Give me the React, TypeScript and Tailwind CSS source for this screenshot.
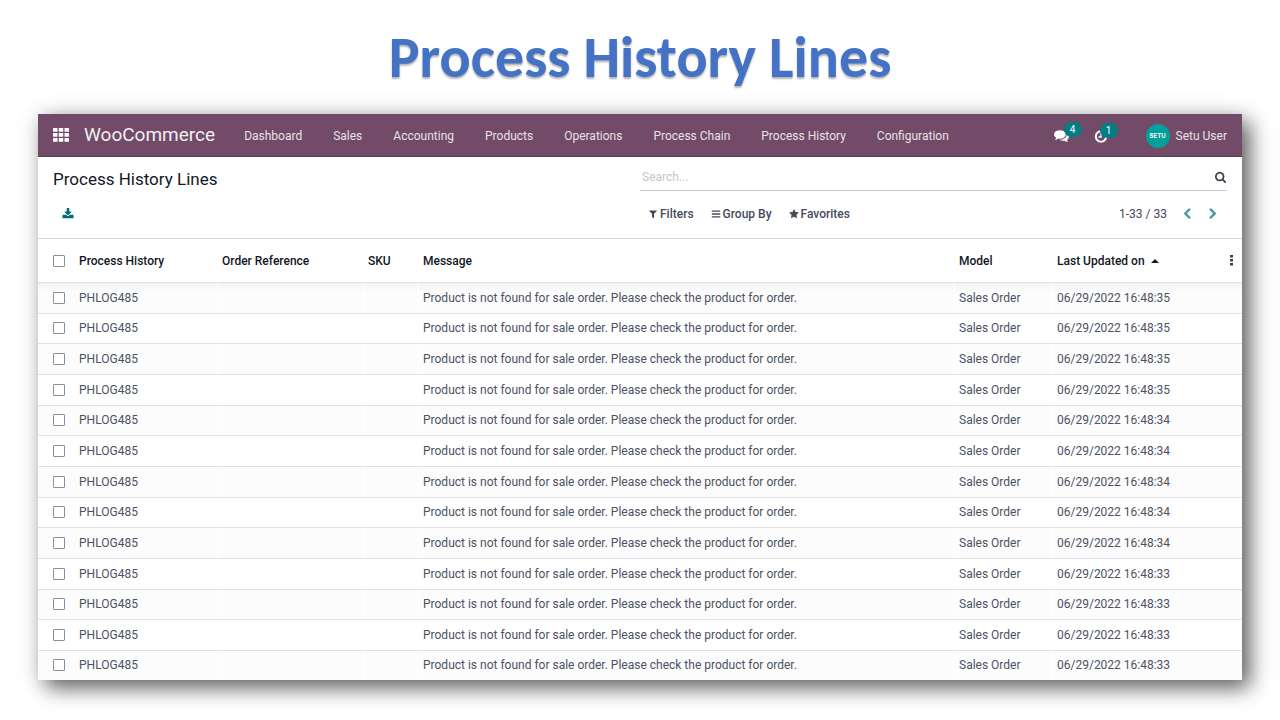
import { useState } from "react";

const navItems = ["Dashboard", "Sales", "Accounting", "Products", "Operations", "Process Chain", "Process History", "Configuration"];

const rows = [35, 35, 35, 35, 34, 34, 34, 34, 34, 33, 33, 33, 33].map((sec, i) => ({
  id: i,
  history: "PHLOG485",
  order: "",
  sku: "",
  message: "Product is not found for sale order. Please check the product for order.",
  model: "Sales Order",
  updated: `06/29/2022 16:48:${sec}`,
}));

const icons = {
  download:
    "M1728 1120v320q0 40-28 68t-68 28h-1472q-40 0-68-28t-28-68v-320q0-40 28-68t68-28h465l135 136q58 56 136 56t136-56l136-136h464q40 0 68 28t28 68zm-325-569q17 41-14 70l-448 448q-18 19-45 19t-45-19l-448-448q-31-29-14-70 17-39 59-39h256v-448q0-26 19-45t45-19h256q26 0 45 19t19 45v448h256q42 0 59 39z",
  search:
    "M1152 832q0-185-131.5-316.5t-316.5-131.5-316.5 131.5-131.5 316.5 131.5 316.5 316.5 131.5 316.5-131.5 131.5-316.5zm512 832q0 52-38 90t-90 38q-54 0-90-38l-343-342q-179 124-399 124-143 0-273.5-55.5t-225-150-150-225-55.5-273.5 55.5-273.5 150-225 225-150 273.5-55.5 273.5 55.5 225 150 150 225 55.5 273.5q0 220-124 399l343 343q37 37 37 90z",
  filter:
    "M1595 295q17 41-14 70l-493 493v742q0 42-39 59-13 5-25 5-27 0-45-19l-256-256q-19-19-19-45v-486l-493-493q-31-29-14-70 17-39 59-39h1280q42 0 59 39z",
  group:
    "M1664 1344v128q0 26-19 45t-45 19h-1408q-26 0-45-19t-19-45v-128q0-26 19-45t45-19h1408q26 0 45 19t19 45zm0-512v128q0 26-19 45t-45 19h-1408q-26 0-45-19t-19-45v-128q0-26 19-45t45-19h1408q26 0 45 19t19 45zm0-512v128q0 26-19 45t-45 19h-1408q-26 0-45-19t-19-45v-128q0-26 19-45t45-19h1408q26 0 45 19t19 45z",
  star: "M1728 647q0 22-26 48l-363 354 86 500q1 7 1 20 0 21-10.500 35.500t-30.500 14.500q-19 0-40-12l-449-236-449 236q-22 12-40 12-21 0-31.500-14.500t-10.500-35.500q0-6 2-20l86-500-364-354q-25-27-25-48 0-37 56-46l502-73 225-455q19-41 49-41t49 41l225 455 502 73q56 9 56 46z",
  comments:
    "M1408 768q0 139-94 257t-256.5 186.5-353.5 68.5q-86 0-176-16-124 88-278 128-36 9-86 16h-3q-11 0-20.5-8t-11.5-21q-1-3-1-6.5t.5-6.5 2-6l2.5-5 3.5-5.5 4-5 4.5-5 4-4.5q5-6 23-25t26-29.5 22.5-29 25-38.5 20.5-44q-124-72-195-177t-71-224q0-139 94-257t256.5-186.5 353.5-68.5 353.5 68.5 256.5 186.5 94 257zm384 256q0 120-71 224.5t-195 176.5q10 24 20.5 44t25 38.5 22.5 29 26 29.5 23 25q1 1 4 4.500t4.500 5 4 5 3.500 5.500l2.500 5 2 6 .5 6.500-1 6.500q-3 14-13 22t-22 7q-50-7-86-16-154-40-278-128-90 16-176 16-271 0-472-132 58 4 88 4 161 0 309-45t264-129q125-92 192-212t67-254q0-77-23-152 129 71 204 178t75 230z",
  left: "M1427 301l-531 531 531 531q19 19 19 45t-19 45l-166 166q-19 19-45 19t-45-19l-742-742q-19-19-19-45t19-45l742-742q19-19 45-19t45 19l166 166q19 19 19 45t-19 45z",
  right:
    "M1363 877l-742 742q-19 19-45 19t-45-19l-166-166q-19-19-19-45t19-45l531-531-531-531q-19-19-19-45t19-45l166-166q19-19 45-19t45 19l742 742q19 19 19 45t-19 45z",
};

function Icon({ name, className }: { name: keyof typeof icons; className: string }) {
  return (
    <svg viewBox="0 0 1792 1792" fill="currentColor" className={className} aria-hidden="true">
      <path d={icons[name]} />
    </svg>
  );
}

function AppsIcon() {
  return (
    <svg viewBox="0 0 16 14" fill="currentColor" className="h-[14px] w-4" aria-hidden="true">
      {[0, 5, 10].map((y) =>
        [0, 5.75, 11.5].map((x) => <rect key={`${x}-${y}`} x={x} y={y} width="4.5" height="3.8" rx="0.6" />),
      )}
    </svg>
  );
}

function Checkbox({ label, checked, onChange }: { label: string; checked: boolean; onChange: () => void }) {
  return (
    <input
      type="checkbox"
      aria-label={label}
      checked={checked}
      onChange={onChange}
      className="block size-3 appearance-none rounded-[1px] border border-[#8b8f9b] bg-white checked:bg-[#017e84]"
    />
  );
}

function Badge({ children, className }: { children: string; className: string }) {
  return (
    <span
      className={`absolute -top-[6px] flex h-[15px] w-[18px] items-center justify-center rounded-full bg-[#017e84] text-[10px] text-white ${className}`}
    >
      {children}
    </span>
  );
}

export default function App() {
  const [selected, setSelected] = useState<number[]>([]);
  const toggle = (id: number) => setSelected((s) => (s.includes(id) ? s.filter((v) => v !== id) : [...s, id]));
  const all = selected.length === rows.length;

  return (
    <div className="min-h-screen bg-white px-[38px] pb-10 font-['Roboto',sans-serif] text-[12px] text-[#4c5263]">
      <h1 className="flex h-[114px] items-center justify-center font-['Carlito','Calibri','Lato',sans-serif] text-[58px] font-bold text-[#4472c4] [text-shadow:0_2px_2px_rgba(0,0,0,0.3)]">
        Process History Lines
      </h1>
      <main className="bg-white shadow-[8px_8px_20px_0_rgba(0,0,0,0.6),0_0_20px_0_rgba(0,0,0,0.1)]">
        <header className="flex h-[43px] items-center border-b border-[#5a3a52] bg-[#714b67] px-[15px] text-[#e9e1e7]">
          <button type="button" aria-label="Apps" className="mr-[15px] text-white">
            <AppsIcon />
          </button>
          <a href="#home" className="mr-[29px] pt-px text-[19px] text-[#f3eef2]">
            WooCommerce
          </a>
          <nav className="flex gap-[31px] pt-px">
            {navItems.map((item) => (
              <a key={item} href="#menu">
                {item}
              </a>
            ))}
          </nav>
          <div className="ml-auto flex items-center pt-px">
            <button type="button" aria-label="Messages" className="relative mr-[25px] text-white">
              <Icon name="comments" className="size-[15px]" />
              <Badge className="left-[10px]">4</Badge>
            </button>
            <button type="button" aria-label="Activities" className="relative mr-[38px] text-white">
              <svg viewBox="0 0 14 14" fill="none" stroke="currentColor" strokeWidth="2" className="size-[14px]" aria-hidden="true">
                <circle cx="7" cy="7.5" r="5.2" />
                <path d="M7 4v4H4.500" strokeWidth="1.300" />
              </svg>
              <Badge className="left-[6px]">1</Badge>
            </button>
            <button type="button" className="flex items-center gap-[6px]">
              <span className="flex size-6 items-center justify-center rounded-full bg-[#00a09d] font-['Inter',sans-serif] text-[6px] font-bold text-white">
                SETU
              </span>
              Setu User
            </button>
          </div>
        </header>

        <section className="grid h-[82px] grid-cols-2 border-b border-[#d0d3d8] px-[15px] pt-px">
          <div className="flex flex-col">
            <h2 className="flex h-11 items-center text-[17px] text-[#111827]">Process History Lines</h2>
            <button type="button" aria-label="Export" className="ml-[9px] self-start text-[#016d73]">
              <Icon name="download" className="mt-[6px] size-3" />
            </button>
          </div>
          <div className="flex flex-col">
            <div className="flex h-[33px] items-center border-b border-[#c9ccd2] pt-[6px]">
              <input
                type="search"
                aria-label="Search"
                placeholder="Search..."
                className="min-w-0 flex-1 px-[2px] outline-none placeholder:text-[#c4c6ca]"
              />
              <button type="button" aria-label="Search" className="text-[#374151]">
                <Icon name="search" className="size-3" />
              </button>
            </div>
            <div className="flex h-[46px] items-center font-medium text-[#454b5a]">
              <div className="flex gap-[17px] pl-2">
                <button type="button" className="flex items-center gap-[2px]">
                  <Icon name="filter" className="size-[10px]" />
                  Filters
                </button>
                <button type="button" className="flex items-center gap-[2px]">
                  <Icon name="group" className="size-[10px]" />
                  Group By
                </button>
                <button type="button" className="flex items-center gap-[2px]">
                  <Icon name="star" className="size-[10px]" />
                  Favorites
                </button>
              </div>
              <span className="ml-auto font-normal">1-33 / 33</span>
              <button type="button" aria-label="Previous" className="ml-[14px] text-[#4a9a9e]">
                <Icon name="left" className="size-3" />
              </button>
              <button type="button" aria-label="Next" className="mr-2 ml-[14px] text-[#4a9a9e]">
                <Icon name="right" className="size-3" />
              </button>
            </div>
          </div>
        </section>

        <table className="h-[441px] w-full table-fixed border-separate border-spacing-0 text-left">
          <colgroup>
            <col className="w-[37px]" />
            <col className="w-[143px]" />
            <col className="w-[146px]" />
            <col className="w-[55px]" />
            <col />
            <col className="w-[98px]" />
            <col className="w-[165px]" />
            <col className="w-6" />
          </colgroup>
          <thead>
            <tr className="h-11 text-[#111827] *:border-b *:border-[#dee2e6] *:px-1 *:font-medium">
              <th>
                <div className="pl-[11px]">
                  <Checkbox label="Select all" checked={all} onChange={() => setSelected(all ? [] : rows.map((r) => r.id))} />
                </div>
              </th>
              <th>Process History</th>
              <th>Order Reference</th>
              <th>SKU</th>
              <th>Message</th>
              <th>Model</th>
              <th>
                <span className="flex items-center gap-[6px]">
                  Last Updated on
                  <svg viewBox="0 0 8 4" fill="currentColor" className="h-1 w-2" aria-hidden="true">
                    <path d="M0 4 4 0l4 4z" />
                  </svg>
                </span>
              </th>
              <th>
                <button type="button" aria-label="Optional columns" className="block pl-2 text-[#374151]">
                  <svg viewBox="0 0 3 11" fill="currentColor" className="h-[11px] w-[3px]" aria-hidden="true">
                    <path d="M0 0h3v2.600H0zM0 4h3v2.600H0zM0 8h3v2.600H0z" />
                  </svg>
                </button>
              </th>
            </tr>
          </thead>
          <tbody>
            {rows.map((row) => (
              <tr
                key={row.id}
                className="*:border-b *:border-b-[#e0e1e4] *:px-1 first:bg-linear-to-b first:from-[#f3f3f4] first:to-[#fcfcfc] first:to-30% odd:bg-[#fcfcfc] last:*:border-b-0"
              >
                <td>
                  <div className="pl-[11px]">
                    <Checkbox label={`Select line ${row.id + 1}`} checked={selected.includes(row.id)} onChange={() => toggle(row.id)} />
                  </div>
                </td>
                <td className="border-r border-r-white">{row.history}</td>
                <td className="border-r border-r-white">{row.order}</td>
                <td className="border-r border-r-white">{row.sku}</td>
                <td className="border-r border-r-white">{row.message}</td>
                <td className="border-r border-r-white">{row.model}</td>
                <td>{row.updated}</td>
                <td />
              </tr>
            ))}
          </tbody>
        </table>
      </main>
    </div>
  );
}
